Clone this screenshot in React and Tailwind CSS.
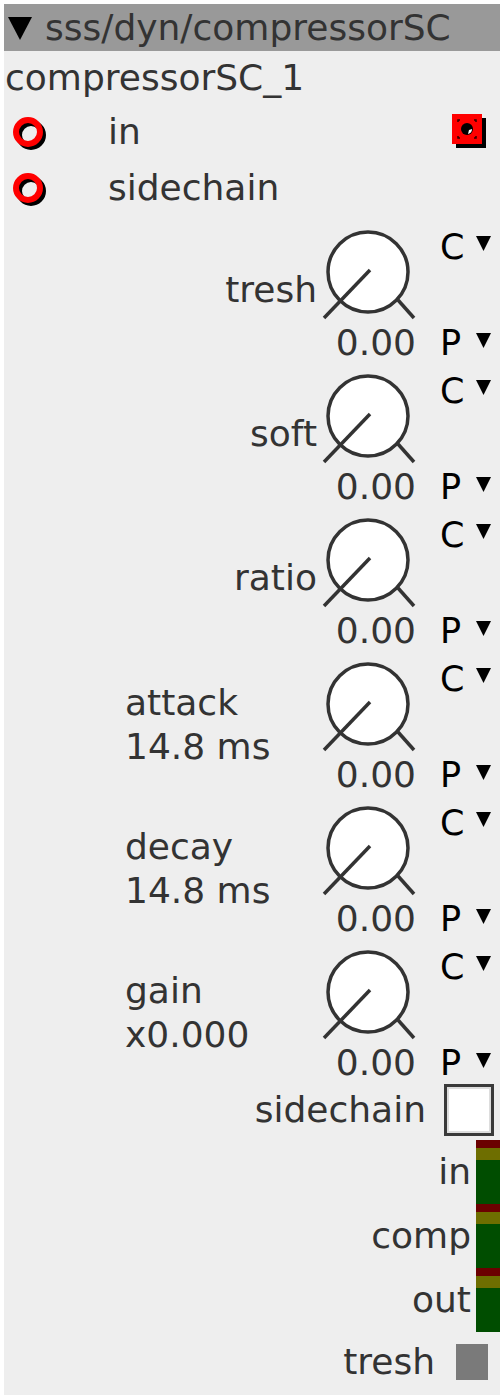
import React from 'react'

const groups = [
  { name: 'tresh', side: true },
  { name: 'soft', side: true },
  { name: 'ratio', side: true },
  { name: 'attack', sub: '14.8 ms' },
  { name: 'decay', sub: '14.8 ms' },
  { name: 'gain', sub: 'x0.000' },
]

function Inlet() {
  return (
    <svg width="40" height="40" viewBox="0 0 40 40">
      <circle cx="21" cy="23" r="12" fill="none" stroke="#000" strokeWidth="6" />
      <circle cx="18" cy="20" r="12" fill="none" stroke="#ff0000" strokeWidth="6" />
    </svg>
  )
}

function Outlet() {
  return (
    <svg width="40" height="40" viewBox="0 0 40 40">
      <rect x="6" y="6" width="30" height="30" fill="#000" />
      <rect x="2" y="2" width="30" height="30" fill="#ff0000" />
      <circle cx="17" cy="17" r="6" fill="#000" />
      <path d="M18 22 A5 5 0 0 0 22 17 L19 18 Z" fill="#fff" />
      <path d="M8 10 V8 H10 M24 8 H26 V10 M26 24 V26 H24 M10 26 H8 V24" stroke="#300" strokeWidth="1.5" fill="none" />
    </svg>
  )
}

function Knob() {
  return (
    <svg width="120" height="100" viewBox="0 0 120 100">
      <circle cx="52" cy="46" r="40" fill="#fff" stroke="#333" strokeWidth="3.5" />
      <line x1="54" y1="44" x2="8" y2="92" stroke="#333" strokeWidth="3.5" />
      <line x1="82" y1="74" x2="98" y2="92" stroke="#333" strokeWidth="3.5" />
    </svg>
  )
}

function Tri({ w = 15, h = 15 }) {
  return (
    <svg width={w} height={h} viewBox="0 0 10 10" preserveAspectRatio="none">
      <polygon points="0,0 10,0 5,10" fill="#000" />
    </svg>
  )
}

function Group({ g }) {
  return (
    <div className="flex h-[144px]">
      <div className="flex-1">
        {g.side ? (
          <div className="-mr-[1px] mt-[52px] text-right leading-[44px]">{g.name}</div>
        ) : (
          <div className="mt-[33px] pl-[121px] leading-[44px]">
            <div>{g.name}</div>
            <div>{g.sub}</div>
          </div>
        )}
      </div>
      <div className="flex w-[120px] flex-col">
        <div className="mt-[10px] h-[100px]">
          <Knob />
        </div>
        <div className="pr-[20px] text-right leading-[34px]">0.00</div>
      </div>
      <div className="flex w-[64px] flex-col justify-between pt-[14px] pl-[4px] text-[35px] leading-[34px] text-black">
        <div className="flex items-start">
          <span className="w-[36px]">C</span>
          <span className="mt-[6px]"><Tri /></span>
        </div>
        <div className="flex items-start">
          <span className="w-[36px]">P</span>
          <span className="mt-[7px]"><Tri /></span>
        </div>
      </div>
    </div>
  )
}

function Meter({ label }) {
  return (
    <div className="flex h-[64px] items-center justify-end">
      <div className="pr-[5px] leading-[40px]">{label}</div>
      <div className="flex h-full w-[24px] flex-col">
        <div className="h-[8px] bg-[#6b0000]" />
        <div className="h-[12px] bg-[#6e6e00]" />
        <div className="flex-1 bg-[#004d00]" />
      </div>
    </div>
  )
}

export default function App() {
  return (
    <div className="min-h-[1400px] bg-white p-1 font-['DejaVu_Sans',sans-serif]">
      <div className="w-[496px] bg-[#eeeeee] pb-[3px] text-[36px] text-[#333]">
        <div className="flex h-[47px] items-center bg-[#999999]">
          <span className="ml-[4px] mr-[13px] mt-[2px]"><Tri w={24} h={23} /></span>
          <span className="leading-[40px]">sss/dyn/compressorSC</span>
        </div>
        <div className="flex h-[53px] items-center pl-[1px]">compressorSC_1</div>
        <div className="flex h-[56px] items-center">
          <span className="ml-[6px]"><Inlet /></span>
          <span className="ml-[58px]">in</span>
          <span className="ml-auto mr-[10px]"><Outlet /></span>
        </div>
        <div className="flex h-[56px] items-center">
          <span className="ml-[6px]"><Inlet /></span>
          <span className="ml-[58px]">sidechain</span>
        </div>
        {groups.map(g => (
          <Group key={g.name} g={g} />
        ))}
        <div className="flex h-[60px] items-center justify-end">
          <span className="pr-[18px]">sidechain</span>
          <div className="mr-[6px] h-[52px] w-[50px] border-[3px] border-[#3a3a3a] bg-white shadow-[inset_0_0_0_2px_#dddddd]" />
        </div>
        <div className="flex flex-col">
          <Meter label="in" />
          <Meter label="comp" />
          <Meter label="out" />
        </div>
        <div className="flex h-[60px] items-center justify-end">
          <span className="pr-[21px]">tresh</span>
          <div className="mr-[12px] h-[36px] w-[32px] bg-[#7a7a7a]" />
        </div>
      </div>
    </div>
  )
}
